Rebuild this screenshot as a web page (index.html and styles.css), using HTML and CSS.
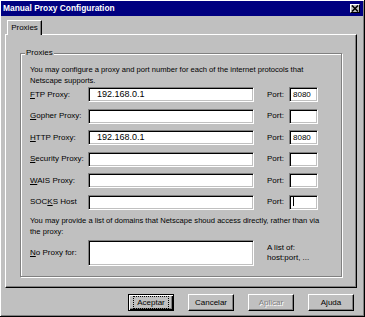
FILE: index.html
```html
<!DOCTYPE html>
<html>
<head>
<meta charset="utf-8">
<link rel="stylesheet" href="styles.css">
</head>
<body>
<div class="window">
  <div class="titlebar">
    <span class="title">Manual Proxy Configuration</span>
    <span class="close"><svg width="8" height="7" viewBox="0 0 8 7"><path d="M1 0.5 L7 6.5 M7 0.5 L1 6.5" stroke="#000" stroke-width="1.6"/></svg></span>
  </div>
  <div class="content">
    <div class="tabs"><span class="tab">Proxies</span></div>
    <div class="panel">
      <div class="group">
        <span class="legend">Proxies</span>
        <p class="intro">You may configure a proxy and port number for each of the internet protocols that Netscape supports.</p>
        <div class="grid">
          <span class="label"><u>F</u>TP Proxy:</span><span class="field">192.168.0.1</span><span class="plabel">Port:</span><span class="field port">8080</span>
          <span class="label"><u>G</u>opher Proxy:</span><span class="field"></span><span class="plabel">Port:</span><span class="field port"></span>
          <span class="label"><u>H</u>TTP Proxy:</span><span class="field">192.168.0.1</span><span class="plabel">Port:</span><span class="field port">8080</span>
          <span class="label"><u>S</u>ecurity Proxy:</span><span class="field"></span><span class="plabel">Port:</span><span class="field port"></span>
          <span class="label"><u>W</u>AIS Proxy:</span><span class="field"></span><span class="plabel">Port:</span><span class="field port"></span>
          <span class="label">SOC<u>K</u>S Host</span><span class="field"></span><span class="plabel">Port:</span><span class="field port"><span class="caret"></span></span>
        </div>
        <p class="intro second">You may provide a list of domains that Netscape shoud access directly, rather than via the proxy:</p>
        <div class="grid noproxy">
          <span class="label"><u>N</u>o Proxy for:</span><span class="field tall"></span><span class="hint">A list of:<br>host:port, ...</span>
        </div>
      </div>
    </div>
    <div class="buttons">
      <span class="btn default"><span class="focus">Aceptar</span></span>
      <span class="btn">Cancelar</span>
      <span class="btn disabled">Aplicar</span>
      <span class="btn">Ajuda</span>
    </div>
  </div>
</div>
</body>
</html>
```

FILE: styles.css
```css
* { box-sizing: border-box; }
html, body { margin: 0; padding: 0; background: #c0c0c0; }
body { font-family: "Liberation Sans", Arial, sans-serif; font-size: 8px; color: #000; }

.window {
  width: 365px; height: 317px;
  padding: 1px;
  background: #c0c0c0;
  border-right: 1px solid #000;
  border-bottom: 1px solid #000;
  box-shadow: inset 1px 1px 0 #fff, inset -1px -1px 0 #808080;
  display: flex; flex-direction: column;
}
.titlebar {
  height: 15px; flex: none;
  background: #000080;
  display: flex; align-items: center; justify-content: space-between;
  padding: 0 3px 0 2px;
}
.title { color: #fff; font-weight: bold; font-size: 8.4px; line-height: 15px; }
.close {
  width: 10px; height: 9px;
  background: #c0c0c0;
  border: 1px solid; border-color: #fff #000 #000 #fff;
  display: flex; align-items: center; justify-content: center;
}
.close svg { display: block; }

.content { flex: 1; display: flex; flex-direction: column; padding: 4px 6px 0 4px; }
.tabs { display: flex; height: 14px; padding-left: 2px; }
.tab {
  width: 35px; height: 15px;
  border: 1px solid; border-bottom: none;
  border-color: #fff #000 transparent #fff;
  box-shadow: inset -1px 0 0 #808080;
  background: #c0c0c0;
  text-align: center; line-height: 13px;
  position: relative; z-index: 1;
}
.panel {
  height: 254px; flex: none;
  border: 1px solid; border-color: #fff #000 #000 #fff;
  box-shadow: inset -1px -1px 0 #808080;
  padding: 18px 14px 10px 14px;
  display: flex;
}
.group {
  flex: 1;
  position: relative;
  border: 1px solid #808080;
  box-shadow: 1px 1px 0 #fff, inset 1px 1px 0 #fff;
  padding: 10px 9px 0 9px;
}
.legend {
  position: absolute; left: 4px; top: -6px;
  background: #c0c0c0; padding: 0 1px;
  line-height: 10px;
}
.intro { margin: 0 0 1px; line-height: 11px; width: 300px; font-size: 7.6px; }
.intro.second { margin: 5px 0 3px; }

.grid {
  display: grid;
  grid-template-columns: 58px 166px 35px 29px;
  grid-auto-rows: 15px;
  row-gap: 6.5px;
  align-items: center;
}
.label { line-height: 10px; }
.plabel { padding-left: 13px; line-height: 10px; }
.field {
  height: 15px;
  background: #fff;
  border: 1px solid; border-color: #808080 #fff #fff #808080;
  box-shadow: inset 1px 1px 0 #000, inset -1px -1px 0 #c0c0c0;
  font-size: 9px; line-height: 13px;
  padding-left: 8px;
  white-space: nowrap;
}
.field.port { padding-left: 3px; font-size: 8px; }
.caret { display: inline-block; width: 1px; height: 9px; background: #000; vertical-align: -1px; }
.noproxy { grid-auto-rows: 26px; }
.field.tall { height: 26px; }
.hint { grid-column: 3 / 5; padding-left: 13px; line-height: 10px; }

.buttons {
  display: flex; justify-content: flex-end; gap: 14px;
  padding: 6px 3px 0 0;
}
.btn {
  width: 46px; height: 17px;
  border: 1px solid; border-color: #fff #000 #000 #fff;
  box-shadow: inset -1px -1px 0 #808080;
  display: flex; align-items: center; justify-content: center;
  line-height: 10px;
}
.btn.default {
  border: 1px solid #000;
  box-shadow: inset 1px 1px 0 #fff, inset -1px -1px 0 #000, inset -2px -2px 0 #808080;
}
.focus { border: 1px dotted #000; padding: 1px 3px; line-height: 9px; }
.btn.disabled { color: #808080; text-shadow: 1px 1px 0 #fff; }
```
